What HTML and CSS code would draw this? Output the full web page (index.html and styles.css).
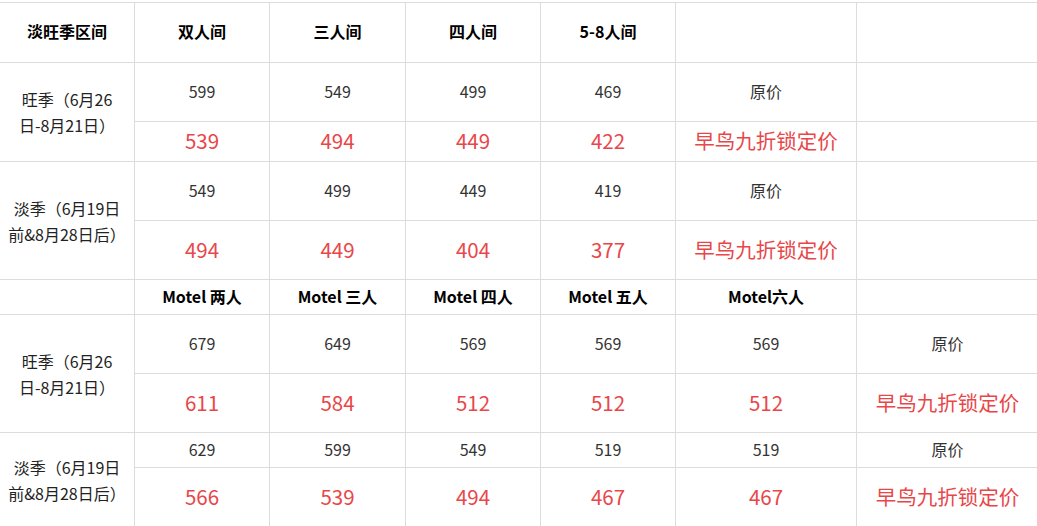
FILE: index.html
```html
<!DOCTYPE html>
<html lang="zh-CN">
<head>
<meta charset="utf-8">
<title>价格表</title>
<link rel="stylesheet" href="styles.css">
</head>
<body>
<div class="price-table">
  <div class="cell head">淡旺季区间</div>
  <div class="cell head">双人间</div>
  <div class="cell head">三人间</div>
  <div class="cell head">四人间</div>
  <div class="cell head">5-8人间</div>
  <div class="cell"></div>
  <div class="cell"></div>

  <div class="cell season span2">旺季（6月26<br>日-8月21日）</div>
  <div class="cell num">599</div>
  <div class="cell num">549</div>
  <div class="cell num">499</div>
  <div class="cell num">469</div>
  <div class="cell num">原价</div>
  <div class="cell"></div>
  <div class="cell red">539</div>
  <div class="cell red">494</div>
  <div class="cell red">449</div>
  <div class="cell red">422</div>
  <div class="cell red">早鸟九折锁定价</div>
  <div class="cell"></div>

  <div class="cell season span2">淡季（6月19日<br>前&amp;8月28日后）</div>
  <div class="cell num">549</div>
  <div class="cell num">499</div>
  <div class="cell num">449</div>
  <div class="cell num">419</div>
  <div class="cell num">原价</div>
  <div class="cell"></div>
  <div class="cell red">494</div>
  <div class="cell red">449</div>
  <div class="cell red">404</div>
  <div class="cell red">377</div>
  <div class="cell red">早鸟九折锁定价</div>
  <div class="cell"></div>

  <div class="cell"></div>
  <div class="cell head">Motel 两人</div>
  <div class="cell head">Motel 三人</div>
  <div class="cell head">Motel 四人</div>
  <div class="cell head">Motel 五人</div>
  <div class="cell head">Motel六人</div>
  <div class="cell"></div>

  <div class="cell season span2">旺季（6月26<br>日-8月21日）</div>
  <div class="cell num">679</div>
  <div class="cell num">649</div>
  <div class="cell num">569</div>
  <div class="cell num">569</div>
  <div class="cell num">569</div>
  <div class="cell num">原价</div>
  <div class="cell red">611</div>
  <div class="cell red">584</div>
  <div class="cell red">512</div>
  <div class="cell red">512</div>
  <div class="cell red">512</div>
  <div class="cell red">早鸟九折锁定价</div>

  <div class="cell season span2">淡季（6月19日<br>前&amp;8月28日后）</div>
  <div class="cell num">629</div>
  <div class="cell num">599</div>
  <div class="cell num">549</div>
  <div class="cell num">519</div>
  <div class="cell num">519</div>
  <div class="cell num">原价</div>
  <div class="cell red">566</div>
  <div class="cell red">539</div>
  <div class="cell red">494</div>
  <div class="cell red">467</div>
  <div class="cell red">467</div>
  <div class="cell red">早鸟九折锁定价</div>
</div>
</body>
</html>
```

FILE: styles.css
```css
html, body {
  margin: 0;
  padding: 0;
  background: #ffffff;
}

body {
  padding-top: 2px;
  font-family: "Noto Sans CJK SC", "Noto Sans", sans-serif;
  overflow: hidden;
}

.price-table {
  display: grid;
  grid-template-columns: 134px 134px 135px 134px 134px 180px 181px;
  grid-template-rows: 59px 58px 39px 58px 58px 34px 58px 58px 34px 58px;
  gap: 1px;
  padding: 1px 1px 0 0;
  background: #dcdcdc;
  width: max-content;
}

.cell {
  background: #ffffff;
  display: flex;
  align-items: center;
  justify-content: center;
  text-align: center;
  font-size: 16px;
  color: #333333;
  line-height: 24px;
  padding-bottom: 3px;
  box-sizing: border-box;
}

.head {
  font-weight: 700;
  color: #000000;
  font-size: 16px;
}

.season {
  color: #222222;
  line-height: 26px;
  padding: 0;
}

.span2 {
  grid-row: span 2;
}

.num {
  color: #333333;
}

.red {
  color: #e8474a;
  font-size: 20.5px;
}
```
